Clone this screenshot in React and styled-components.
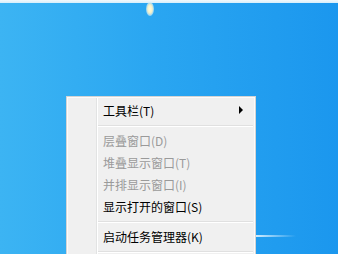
import React from 'react';
import styled, { createGlobalStyle } from 'styled-components';

const GlobalStyle = createGlobalStyle`
  html, body {
    margin: 0;
    padding: 0;
  }
  body {
    font-family: "Noto Sans CJK SC", "Noto Sans", sans-serif;
  }
`;

const Desktop = styled.div`
  position: relative;
  width: 338px;
  height: 254px;
  overflow: hidden;
  background: linear-gradient(90deg, #3cb4f3 0%, #2aa6f1 45%, #1b97ee 100%);
`;

const TopStrip = styled.div`
  height: 3px;
  background: linear-gradient(180deg, #f2f8fb 0%, #d6eefb 100%);
`;

const Glow = styled.div`
  position: absolute;
  left: 146px;
  top: 2px;
  width: 8px;
  height: 14px;
  border-radius: 50%;
  background: radial-gradient(ellipse at center, #fffbe0 0%, #f4f0c8 40%, rgba(200, 235, 255, 0.6) 70%, rgba(60, 180, 243, 0) 100%);
`;

const Streak = styled.div`
  position: absolute;
  left: 256px;
  top: 235px;
  width: 40px;
  height: 2px;
  background: linear-gradient(90deg, rgba(230, 245, 255, 0.9), rgba(160, 215, 250, 0));
`;

const Menu = styled.div`
  position: absolute;
  left: 66px;
  top: 96px;
  width: 184px;
  padding: 2px 2px 0;
  border: 1px solid #d4d4d4;
  border-bottom: none;
  box-shadow: inset 1px 1px 0 #fbfbfb, inset -1px 0 0 #fbfbfb;
  background:
    linear-gradient(90deg, transparent 29px, #e2e3e3 29px, #e2e3e3 30px, #ffffff 30px, #ffffff 31px, transparent 31px),
    #f0f0f0;
  display: flex;
  flex-direction: column;
`;

const Item = styled.div`
  height: 22px;
  display: flex;
  align-items: center;
  justify-content: space-between;
  padding: 0 10px 0 34px;
  font-size: 12px;
  color: ${(p) => (p.disabled ? '#9a9a9a' : '#000')};
  white-space: nowrap;
`;

const Separator = styled.div`
  height: 8px;
  display: flex;
  align-items: center;
  padding-left: 29px;
  &::after {
    content: '';
    flex: 1;
    height: 1px;
    background: #e0e0e0;
    box-shadow: 0 1px 0 #ffffff;
  }
`;

const Arrow = styled.span`
  width: 0;
  height: 0;
  border-top: 4px solid transparent;
  border-bottom: 4px solid transparent;
  border-left: 4px solid #000;
`;

const items = [
  { label: '工具栏(T)', sub: true },
  { sep: true },
  { label: '层叠窗口(D)', disabled: true },
  { label: '堆叠显示窗口(T)', disabled: true },
  { label: '并排显示窗口(I)', disabled: true },
  { label: '显示打开的窗口(S)' },
  { sep: true },
  { label: '启动任务管理器(K)' },
  { sep: true },
];

export default function App() {
  return (
    <>
      <GlobalStyle />
      <Desktop>
        <TopStrip />
        <Glow />
        <Streak />
        <Menu>
          {items.map((it, i) =>
            it.sep ? (
              <Separator key={i} />
            ) : (
              <Item key={i} disabled={it.disabled}>
                <span>{it.label}</span>
                {it.sub && <Arrow />}
              </Item>
            )
          )}
        </Menu>
      </Desktop>
    </>
  );
}
